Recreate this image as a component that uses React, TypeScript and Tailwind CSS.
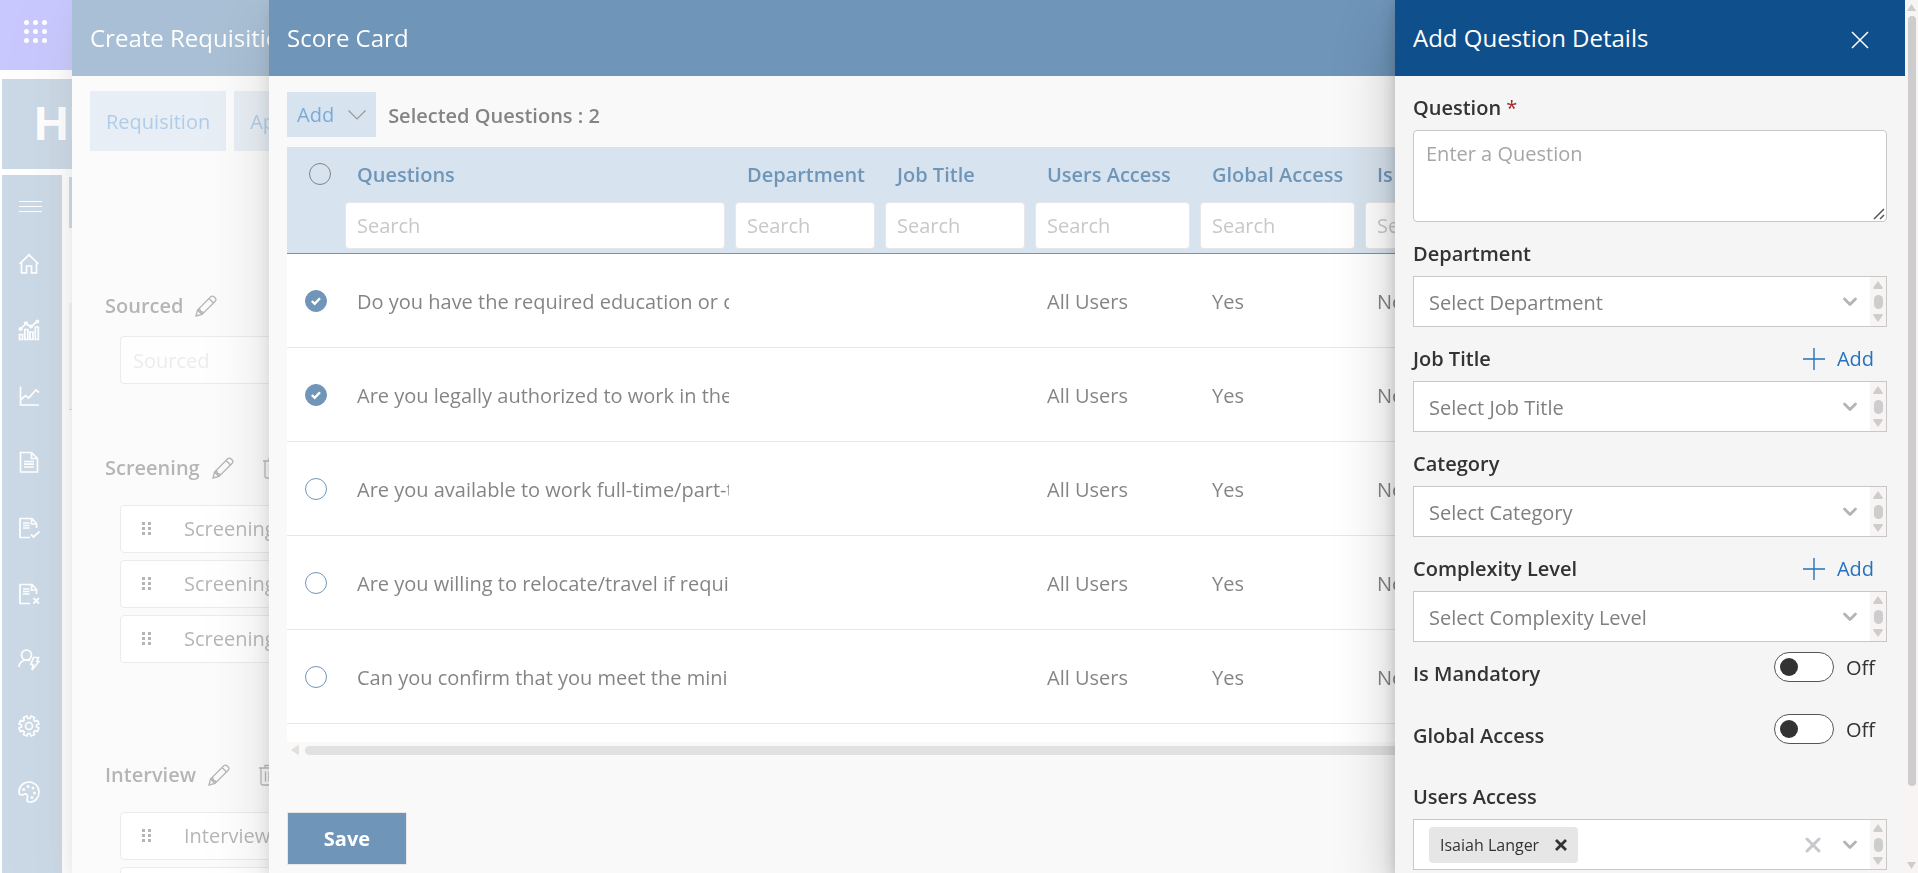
import { useState, type ReactNode } from 'react'

const QUESTIONS = [
  { text: 'Do you have the required education or certifications?', selected: true },
  { text: 'Are you legally authorized to work in the country?', selected: true },
  { text: 'Are you available to work full-time/part-time?', selected: false },
  { text: 'Are you willing to relocate/travel if required?', selected: false },
  { text: 'Can you confirm that you meet the minimum requirements?', selected: false },
]

const COLUMNS = ['Questions', 'Department', 'Job Title', 'Users Access', 'Global Access', 'Is Mandatory']

// Eight-toothed outline centred in a 22-unit box.
const GEAR = Array.from({ length: 8 }, (_, i) =>
  [[7.6, -15], [10.2, -11], [10.2, 11], [7.6, 15]].map(([r, offset]) => {
    const angle = ((i * 45 + 22.5 + offset) * Math.PI) / 180
    return `${(11 + r * Math.cos(angle)).toFixed(2)},${(11 + r * Math.sin(angle)).toFixed(2)}`
  }).join(' '),
).join(' ')

function Icon({ children, className = 'size-[22px]', width = 1.5 }: { children: ReactNode; className?: string; width?: number }) {
  return (
    <svg viewBox="0 0 22 22" className={className} fill="none" stroke="currentColor" strokeWidth={width} aria-hidden="true">
      {children}
    </svg>
  )
}

const Page = () => <path d="M18.500 11V6.500L14 1.500H2v19h10M13.500 1.500v5.500H18.500M5 6h6.500M5 8.500h6.500M5 11h6.500" />

const NAV: { label: string; icon: ReactNode }[] = [
  { label: 'Home', icon: <path d="M1.500 11 11 1.800 20.500 11M3.500 9.500v10.300h5V13h5v6.800h5V9.500" /> },
  {
    label: 'Analytics',
    icon: (
      <>
        <path d="M1.500 15.500h3v5h-3zM6.800 10.500h3v10h-3zM12 13h3v7.500h-3zM17.300 8h3v12.500h-3zM3 9.500l5-5 5 3.500 6-5.500" />
        <circle cx="2.500" cy="10" r="1.200" />
        <circle cx="8" cy="4.300" r="1.200" />
        <circle cx="13" cy="7.500" r="1.200" />
        <circle cx="19.300" cy="2.500" r="1.200" />
      </>
    ),
  },
  { label: 'Trends', icon: <path d="M2.500 1.500v18.500h18.500M3 14.500l4.500-4 3 2.500 7.500-8 3 2.500" /> },
  { label: 'Documents', icon: <path d="M2.500 1.500h11l6 6v13.500h-17zM13.500 1.500v6h6M6 10.500h10M6 13.200h10M6 16h10" /> },
  { label: 'Approved', icon: <><Page /><path d="m13 17.500 2.500 2.500 6-5.500" strokeWidth="1.800" /></> },
  { label: 'Rejected', icon: <><Page /><path d="m15.500 15 5.500 5.500m0-5.500-5.500 5.500" strokeWidth="1.800" /></> },
  {
    label: 'Users',
    icon: (
      <>
        <circle cx="8.500" cy="6" r="5" />
        <path d="M1 18c0-4.500 3.500-7 7.500-7 1.500 0 2.500.300 3.500.800M15.500 8.500h5l-1.700 4h2.200l-7 8.500 1.200-5.500h-2.400z" />
      </>
    ),
  },
  {
    label: 'Settings',
    icon: (
      <>
        <circle cx="11" cy="11" r="3.500" />
        <polygon points={GEAR} strokeLinejoin="round" />
      </>
    ),
  },
  {
    label: 'Theme',
    icon: (
      <>
        <path d="M11 1c5.500 0 10 4.500 10 10s-4 10-9 10c-3 0-3.500-1.500-2.800-3.500.800-2.500.300-4-1.400-4.500-1.600-.500-2.300 1-3.800 1C1.800 14 1 12.500 1 11 1 5.500 5.500 1 11 1z" />
        <g fill="currentColor" stroke="none">
          <circle cx="5.700" cy="8.500" r="1.500" />
          <circle cx="10" cy="5.500" r="1.500" />
          <circle cx="15" cy="7" r="1.500" />
          <circle cx="16.500" cy="12" r="1.500" />
          <circle cx="14" cy="16.500" r="1.500" />
        </g>
      </>
    ),
  },
]

function Panel({ label, position, children }: { label: string; position: string; children: ReactNode }) {
  return (
    <>
      <div className="fixed inset-0 bg-white/40" />
      <section
        role="dialog"
        aria-label={label}
        className={`fixed inset-y-0 right-0 overflow-hidden bg-[#f5f5f5] shadow-[0_26px_58px_rgba(0,0,0,0.22),0_5px_14px_rgba(0,0,0,0.18)] ${position}`}
      >
        {children}
      </section>
    </>
  )
}

function PanelHeader({ title, onClose }: { title: string; onClose?: boolean }) {
  return (
    <header className="flex h-[76px] items-center justify-between bg-[#0f4f8b] pr-9 pl-[18px] text-white">
      <h2 className="text-2xl whitespace-nowrap">{title}</h2>
      {onClose && (
        <button type="button" aria-label="Close" className="mt-1">
          <svg viewBox="0 0 18 18" className="size-[18px]" fill="none" stroke="currentColor" strokeWidth="1.500">
            <path d="m1 1 16 16M17 1 1 17" />
          </svg>
        </button>
      )}
    </header>
  )
}

function Pencil() {
  return (
    <button type="button" aria-label="Edit">
      <Icon width={1.300}>
        <path d="M1 21l1.500-6L15.800 1.800c1-1 2.300-1 3.200 0l1.200 1.200c1 1 1 2.200 0 3.200L7 19.500zM2.500 15 7 19.500M14 3.500l4.500 4.500M2.500 15l2.500-.500.500 2 2 .500-.500 2.500" />
      </Icon>
    </button>
  )
}

function Trash() {
  return (
    <button type="button" aria-label="Delete">
      <Icon width={1.300}>
        <path d="M1 4h20M3 4v15.500c0 .800.500 1.500 1.500 1.500h13c1 0 1.500-.700 1.500-1.500V4M7 4V1.500h8V4M7.500 7.500v10M11 7.500v10M14.500 7.500v10" />
      </Icon>
    </button>
  )
}

function Stage({ title, children, trash }: { title: string; children: ReactNode; trash?: boolean }) {
  return (
    <section className="pl-[33px]">
      <div className="flex h-7 items-center whitespace-nowrap">
        <h3 className="mr-3 text-[20px] font-semibold">{title}</h3>
        <Pencil />
        {trash && <div className="ml-7 flex"><Trash /></div>}
      </div>
      <div className="pl-[15px]">{children}</div>
    </section>
  )
}

function StageItem({ name }: { name: string }) {
  return (
    <li className="flex h-12 items-center gap-8 rounded-sm border border-[#c8c8c8] bg-white pl-[21px] text-[20px]">
      <svg viewBox="0 0 10 14" className="h-[14px] w-[10px]" fill="currentColor" aria-hidden="true">
        <path d="M0 0h3v3H0zM6 0h3v3H6zM0 5h3v3H0zM6 5h3v3H6zM0 10h3v3H0zM6 10h3v3H6z" />
      </svg>
      {name}
    </li>
  )
}

function RoundCheck({ checked, label, border, onChange }: { checked: boolean; label: string; border: string; onChange: () => void }) {
  return (
    <span className="grid size-[22px]">
      <input
        type="checkbox"
        aria-label={label}
        checked={checked}
        onChange={onChange}
        className={`col-start-1 row-start-1 size-[22px] appearance-none rounded-full border checked:bg-[#0f4f8b] ${border}`}
      />
      {checked && (
        <svg viewBox="0 0 22 22" className="pointer-events-none col-start-1 row-start-1" fill="none" stroke="white" strokeWidth="2.400" aria-hidden="true">
          <path d="m6.800 11 2.900 2.800 5.300-5.600" />
        </svg>
      )}
    </span>
  )
}

function MiniScroll() {
  return (
    <div className="flex w-4 shrink-0 flex-col items-center justify-between bg-[#f8f4f3] py-1" aria-hidden="true">
      <svg viewBox="0 0 10 8" className="h-2 w-[10px]" fill="#cdcdcd"><path d="M5 0 10 7 9 8H1L0 7z" /></svg>
      <div className="h-[14px] w-[9px] rounded-full bg-[#cdcdcd]" />
      <svg viewBox="0 0 10 8" className="h-2 w-[10px]" fill="#cdcdcd"><path d="M5 8 0 1 1 0h8l1 1z" /></svg>
    </div>
  )
}

function Chevron() {
  return (
    <svg viewBox="0 0 16 10" className="h-[10px] w-4" fill="none" stroke="#b3b3b8" strokeWidth="2.800" strokeLinecap="round" strokeLinejoin="round" aria-hidden="true">
      <path d="m2.500 2 5.500 5.500L13.500 2" />
    </svg>
  )
}

function SelectField({ id, label, add }: { id: string; label: string; add?: boolean }) {
  return (
    <div>
      <div className="flex items-center justify-between pt-[18px] pb-2">
        <label htmlFor={id} className="h-7 text-[20px] leading-7 font-semibold">{label}</label>
        {add && (
          <button type="button" className="mr-[13px] flex h-7 items-center gap-3 text-[20px] leading-7 text-[#2472c0]">
            <Icon width={1.400}><path d="M11 0v22M0 11h22" /></Icon>
            Add
          </button>
        )}
      </div>
      <div className="flex h-[51px] border border-[#c8c8c8] bg-white">
        <div className="grid flex-1 items-center">
          <select id={id} className="col-start-1 row-start-1 h-full w-full appearance-none bg-transparent pt-[2px] pl-[15px] text-[20px] text-[#808080]">
            <option>{`Select ${label}`}</option>
          </select>
          <span className="pointer-events-none col-start-1 row-start-1 mr-3 justify-self-end"><Chevron /></span>
        </div>
        <MiniScroll />
      </div>
    </div>
  )
}

function ToggleField({ id, label }: { id: string; label: string }) {
  const [on, setOn] = useState(false)
  return (
    <div className="flex h-[62px] items-start justify-between">
      <label htmlFor={id} className="mt-[18px] text-[20px] leading-7 font-semibold">{label}</label>
      <div className="mt-[9px] mr-3 flex items-center gap-3">
        <button
          id={id}
          type="button"
          role="switch"
          aria-checked={on}
          onClick={() => setOn(!on)}
          className={`flex h-[30px] w-[60px] items-center rounded-full border border-[#555] bg-white px-[5px] ${on ? 'justify-end' : 'justify-start'}`}
        >
          <span className="size-[18px] rounded-full bg-[#333]" />
        </button>
        <span className="pt-[2px] text-[20px]">{on ? 'On' : 'Off'}</span>
      </div>
    </div>
  )
}

function SiteRail() {
  return (
    <div className="flex h-full flex-col">
      <div className="flex h-[70px] shrink-0 bg-[#0000ff] pt-5 pl-6">
        <button type="button" aria-label="App launcher" className="size-[23px] text-white">
          <svg viewBox="0 0 23 23" fill="currentColor">
            {[2.500, 11.500, 20.500].flatMap((y) => [2.500, 11.500, 20.500].map((x) => <circle key={`${x}-${y}`} cx={x} cy={y} r="2.500" />))}
          </svg>
        </button>
      </div>
      <div className="mt-[9px] ml-[2px] flex h-[90px] shrink-0 items-center bg-[#0f4f8b] pl-8 font-['Liberation_Sans',sans-serif] text-5xl font-bold text-white">HR</div>
      <div className="mt-[6px] ml-[2px] flex flex-1 gap-[7px]">
        <nav className="flex w-[60px] shrink-0 flex-col items-start bg-[#0f4f8b] pt-5 pl-4 text-white">
          <button type="button" aria-label="Menu" className="mb-9">
            <svg viewBox="0 0 24 22" className="h-[22px] w-6" stroke="currentColor" strokeWidth="1.200"><path d="M1 6.500h24M1 11.500h24M1 16.500h24" /></svg>
          </button>
          <div className="flex flex-col gap-11">
            {NAV.map((item) => (
              <a key={item.label} href="#" aria-label={item.label}><Icon width={1.700}>{item.icon}</Icon></a>
            ))}
          </div>
        </nav>
        <div className="flex-1 pt-[2px]">
          <div className="h-[51px] bg-[#0f4f8b]" />
          <div className="mt-[75px] h-[107px] border-b border-[#0f4f8b] bg-[#bcd0e3]" />
        </div>
      </div>
    </div>
  )
}

function Requisition() {
  return (
    <>
      <PanelHeader title="Create Requisition" />
      <div className="flex gap-2 pt-[15px] pl-[18px]">
        {['Requisition', 'Approvals'].map((tab) => (
          <button key={tab} type="button" className="h-[60px] bg-[#bcd0e3] px-4 pt-[2px] text-[20px] text-[#2472c0]">{tab}</button>
        ))}
      </div>
      <div className="pt-[141px]">
        <Stage title="Sourced">
          <input aria-label="Sourced" disabled placeholder="Sourced" className="mt-4 h-12 w-full rounded-sm border border-[#c8c8c8] bg-white/70 px-3 text-[20px] placeholder:text-[#cccccc]" />
        </Stage>
        <div className="h-[70px]" />
        <Stage title="Screening" trash>
          <ul className="mt-[23px] flex flex-col gap-[7px]">
            <StageItem name="Screening" />
            <StageItem name="Screening" />
            <StageItem name="Screening" />
          </ul>
        </Stage>
        <div className="h-[98px]" />
        <Stage title="Interview" trash>
          <ul className="mt-[23px] flex flex-col gap-[7px]">
            <StageItem name="Interview" />
            <StageItem name="Interview" />
          </ul>
        </Stage>
      </div>
    </>
  )
}

function ScoreCard() {
  const [selected, setSelected] = useState(QUESTIONS.map((q) => q.selected))
  const count = selected.filter(Boolean).length
  const all = count === selected.length
  return (
    <>
      <PanelHeader title="Score Card" />
      <div className="pl-[18px]">
        <div className="flex items-center gap-3 pt-4 pb-[10px]">
          <button type="button" className="flex h-[45px] items-center gap-[14px] bg-[#bcd0e3] px-[10px] text-[20px] text-[#2472c0]">
            Add
            <svg viewBox="0 0 18 10" className="h-[10px] w-[18px]" fill="none" stroke="#555" strokeWidth="1.200" aria-hidden="true"><path d="m.500.500 8.500 8.500L17.500.500" /></svg>
          </button>
          <p className="pt-[2px] text-[20px] font-semibold">Selected Questions : {count}</p>
        </div>
        <div className="h-[595px] overflow-hidden bg-white">
          <table className="w-[1618px] table-fixed border-separate border-spacing-0 text-left text-[20px]">
            <colgroup>
              <col className="w-[53px]" />
              <col className="w-[390px]" />
              <col className="w-[150px]" />
              <col className="w-[150px]" />
              <col className="w-[165px]" />
              <col className="w-[165px]" />
              <col />
            </colgroup>
            <thead>
              <tr className="h-[107px] bg-[#bcd0e3] align-top">
                <th className="border-b border-[#0f4f8b] pt-4 pl-[22px]">
                  <RoundCheck
                    label="Select all"
                    checked={all}
                    border="border-[#333]"
                    onChange={() => setSelected(selected.map(() => !all))}
                  />
                </th>
                {COLUMNS.map((name) => (
                  <th key={name} className="border-b border-[#0f4f8b] px-[5px] font-semibold whitespace-nowrap text-[#0f4f8b]">
                    <div className="pt-[14px] pb-[13px] pl-3 leading-7">{name}</div>
                    <input aria-label={`Search ${name}`} placeholder="Search" className="block h-[47px] w-full rounded-sm border border-[#d8d8d8] bg-white px-[11px] font-normal placeholder:text-[#a3a3a3]" />
                  </th>
                ))}
              </tr>
            </thead>
            <tbody className="[&_td]:border-b [&_td]:border-[#d8d8d8]">
              {QUESTIONS.map((q, i) => (
                <tr key={q.text} className="h-[94px]">
                  <td className="pl-[18px]">
                    <RoundCheck
                      label={q.text}
                      checked={selected[i]}
                      border="border-[#0f4f8b]"
                      onChange={() => setSelected(selected.map((v, j) => (j === i ? !v : v)))}
                    />
                  </td>
                  <td className="pt-[2px] pr-px pl-[17px]"><div className="overflow-hidden whitespace-nowrap">{q.text}</div></td>
                  <td />
                  <td />
                  <td className="pt-[2px] pl-[17px]">All Users</td>
                  <td className="pt-[2px] pl-[17px]">Yes</td>
                  <td className="pt-[2px] pl-[17px]">No</td>
                </tr>
              ))}
            </tbody>
          </table>
        </div>
        <div className="flex h-4 items-center gap-[6px] bg-[#f8f4f3] pl-1" aria-hidden="true">
          <svg viewBox="0 0 8 10" className="h-[10px] w-2" fill="#cdcdcd"><path d="M0 5 7 0l1 1v8l-1 1z" /></svg>
          <div className="h-[9px] w-4/5 rounded-full bg-[#cdcdcd]" />
        </div>
        <button type="button" className="mt-[54px] h-[53px] w-[120px] border border-[#d8d8d8] bg-[#0f4f8b] text-[20px] font-bold text-white">Save</button>
      </div>
    </>
  )
}

function QuestionDetails() {
  return (
    <div className="flex h-full">
      <div className="min-w-0 flex-1">
        <PanelHeader title="Add Question Details" onClose />
        <form className="px-[18px]">
          <label htmlFor="question" className="block pt-[18px] pb-2 text-[20px] leading-7 font-semibold">
            Question <span className="font-normal text-[#a4262c]">*</span>
          </label>
          <div className="grid">
            <textarea id="question" placeholder="Enter a Question" className="col-start-1 row-start-1 h-[92px] w-full resize-none rounded-sm border border-[#c8c8c8] bg-white px-3 py-[9px] text-[20px] leading-7 placeholder:text-[#a6a6a6]" />
            <svg viewBox="0 0 12 12" className="pointer-events-none col-start-1 row-start-1 mr-[2px] mb-[2px] size-3 self-end justify-self-end" stroke="#555" strokeWidth="1.500" aria-hidden="true">
              <path d="M1 11 11 1M7 11l4-4" />
            </svg>
          </div>
          <SelectField id="department" label="Department" />
          <SelectField id="job-title" label="Job Title" add />
          <SelectField id="category" label="Category" />
          <SelectField id="complexity" label="Complexity Level" add />
          <ToggleField id="mandatory" label="Is Mandatory" />
          <ToggleField id="global" label="Global Access" />
          <label htmlFor="users" className="block pt-[17px] pb-2 text-[20px] leading-7 font-semibold">Users Access</label>
          <div className="flex h-[51px] border border-[#c8c8c8] bg-white">
            <div className="flex min-w-0 flex-1 items-center pr-3 pl-[15px]">
              <span className="flex h-9 items-center gap-4 rounded-sm bg-[#e6e6e6] px-[11px] text-base whitespace-nowrap">
                Isaiah Langer
                <button type="button" aria-label="Remove Isaiah Langer">
                  <svg viewBox="0 0 12 12" className="size-3" stroke="#333" strokeWidth="2.800"><path d="m1 1 10 10M11 1 1 11" /></svg>
                </button>
              </span>
              <input id="users" className="min-w-0 flex-1 outline-none" />
              <button type="button" aria-label="Clear all" className="mr-[21px]">
                <svg viewBox="0 0 16 16" className="size-4" stroke="#c8c8cc" strokeWidth="3" strokeLinecap="round"><path d="m2 2 12 12M14 2 2 14" /></svg>
              </button>
              <Chevron />
            </div>
            <MiniScroll />
          </div>
        </form>
      </div>
      <div className="flex w-[13px] flex-col items-center bg-[#f8f4f3] py-1" aria-hidden="true">
        <svg viewBox="0 0 9 7" className="h-[7px] w-[9px] shrink-0" fill="#cdcdcd"><path d="M4.500 0 9 7H0z" /></svg>
        <div className="mt-[5px] h-[89%] w-2 shrink-0 rounded-full bg-[#cdcdcd]" />
        <svg viewBox="0 0 9 7" className="mt-auto h-[7px] w-[9px] shrink-0" fill="#cdcdcd"><path d="M4.500 7 0 0h9z" /></svg>
      </div>
    </div>
  )
}

export default function App() {
  return (
    <div className="h-screen overflow-hidden bg-white font-['Open_Sans','Noto_Sans',sans-serif] text-[#333]">
      <SiteRail />
      <Panel label="Create Requisition" position="left-[72px]"><Requisition /></Panel>
      <Panel label="Score Card" position="left-[269px]"><ScoreCard /></Panel>
      <Panel label="Add Question Details" position="w-[523px]"><QuestionDetails /></Panel>
    </div>
  )
}
